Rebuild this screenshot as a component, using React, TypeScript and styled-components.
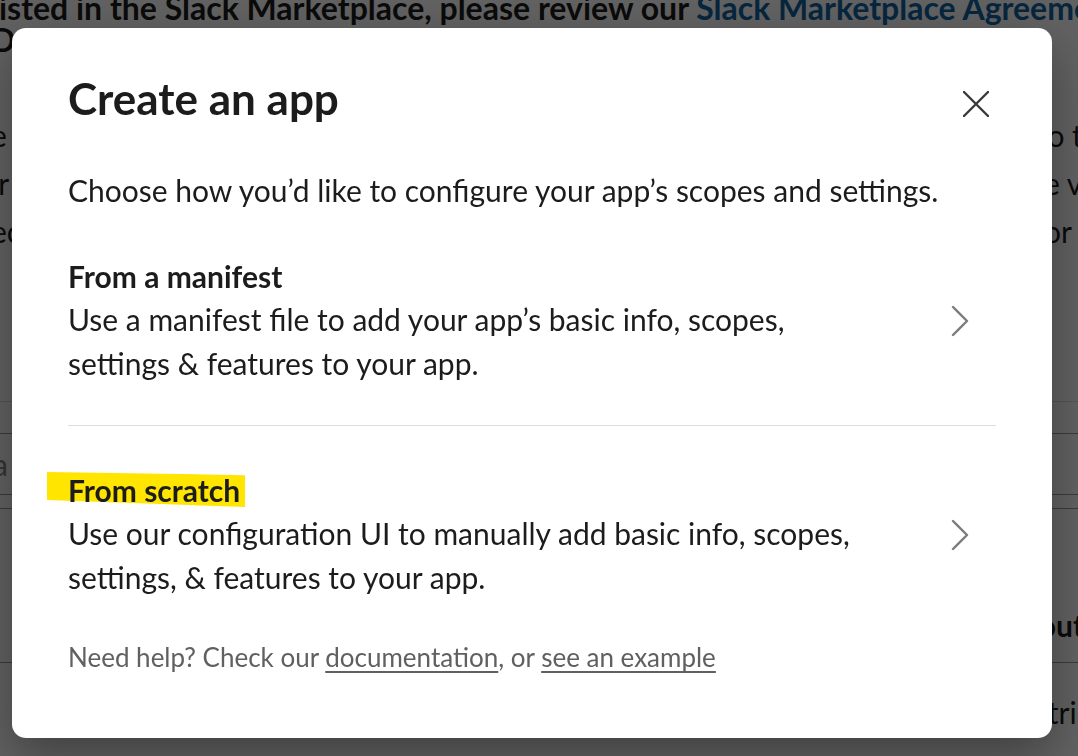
import { createGlobalStyle, styled } from "styled-components";

const GlobalStyle = createGlobalStyle`
  html, body {
    margin: 0;
    padding: 0;
    height: 100%;
    overflow: hidden;
    background: #ffffff;
  }
  body {
    font-family: Lato, "Noto Sans", sans-serif;
    color: #1d1c1d;
  }
`;

type BgRow = { left: string; right: string; split: number };

const bgRows: BgRow[] = [
  { left: "e", right: "into the", split: 1022 },
  { left: "ir", right: "e view", split: 1053 },
  { left: "ec", right: "or", split: 1053 },
];

const ChevronIcon = () => (
  <svg width="18" height="32" viewBox="0 0 18 32" fill="none">
    <path d="M2 2L16 16L2 30" stroke="#7c7c7c" strokeWidth="2.4" strokeLinecap="round" strokeLinejoin="round" />
  </svg>
);

const App = () => {
  return (
    <>
      <GlobalStyle />
      <Page>
        <Lead>
          listed in the Slack Marketplace, please review our <BgLink>Slack Marketplace Agreement,</BgLink>
          <br />
          Developer Policy, API TOS, and Brand Guidelines.
        </Lead>
        <BgPara>
          {bgRows.map((row, i) => (
            <BgLine key={i} $split={row.split}>
              <span>{row.left}</span>
              <span>{row.right}</span>
            </BgLine>
          ))}
        </BgPara>
        <BgRule />
        <BgInput>a</BgInput>
        <BgRule $dark />
        <BgHeading>
          <span />
          <span>About</span>
        </BgHeading>
        <BgRule $dark $gap={19} />
        <BgLine $split={1014} $gap={25}>
          <span />
          <span>Distribution</span>
        </BgLine>
      </Page>

      <Overlay>
        <Modal role="dialog" aria-label="Create an app">
          <Header>
            <Title>Create an app</Title>
            <CloseButton aria-label="Close">
              <svg width="26" height="26" viewBox="0 0 26 26" fill="none">
                <path d="M1 1L25 25M25 1L1 25" stroke="#3b3a3b" strokeWidth="2.4" strokeLinecap="round" />
              </svg>
            </CloseButton>
          </Header>

          <Intro>Choose how you’d like to configure your app’s scopes and settings.</Intro>

          <Options>
            <Option>
              <OptionText>
                <OptionTitle>From a manifest</OptionTitle>
                <OptionDesc>
                  Use a manifest file to add your app’s basic info, scopes, settings &amp; features to your app.
                </OptionDesc>
              </OptionText>
              <ChevronWrap>
                <ChevronIcon />
              </ChevronWrap>
            </Option>
            <Option>
              <OptionText>
                <OptionTitle>
                  <Highlight>From scratch</Highlight>
                </OptionTitle>
                <OptionDesc>
                  Use our configuration UI to manually add basic info, scopes, settings, &amp; features to your app.
                </OptionDesc>
              </OptionText>
              <ChevronWrap>
                <ChevronIcon />
              </ChevronWrap>
            </Option>
          </Options>

          <Footer>
            Need help? Check our <FooterLink>documentation</FooterLink>, or <FooterLink>see an example</FooterLink>
          </Footer>
        </Modal>
      </Overlay>
    </>
  );
};

/* page behind the dialog */

const Page = styled.div`
  width: 1130px;
  margin-left: -9px;
  padding-top: 1px;
  font-size: 30px;
  color: #1d1c1d;
`;

const Lead = styled.div`
  margin-top: -9px;
  font-size: 32px;
  font-weight: 700;
  line-height: 32px;
  white-space: nowrap;
`;

const BgLink = styled.span`
  color: #1264a3;
`;

const BgPara = styled.div`
  margin-top: 55px;
`;

const BgLine = styled.div<{ $split: number; $gap?: number }>`
  display: grid;
  grid-template-columns: ${({ $split }) => $split}px 1fr;
  margin-top: ${({ $gap }) => $gap ?? 0}px;
  line-height: 48px;
  white-space: nowrap;
`;

const BgRule = styled.div<{ $dark?: boolean; $gap?: number }>`
  height: 1px;
  background: ${({ $dark }) => ($dark ? "#9a9a9a" : "#dddddd")};
  margin-top: ${({ $dark, $gap }) => $gap ?? ($dark ? 13 : 146)}px;
`;

const BgInput = styled.div`
  margin-top: 31px;
  height: 60px;
  border-top: 1px solid #9a9a9a;
  border-bottom: 1px solid #9a9a9a;
  line-height: 60px;
  padding-left: 2px;
  color: #868686;
`;

const BgHeading = styled.div`
  display: grid;
  grid-template-columns: 1010px 1fr;
  margin-top: 98px;
  font-weight: 700;
  line-height: 36px;
  white-space: nowrap;
`;

/* dialog */

const Overlay = styled.div`
  position: fixed;
  inset: 0;
  background: rgba(0, 0, 0, 0.62);
  display: flex;
  align-items: flex-start;
  justify-content: flex-start;
  padding: 28px 0 0 12px;
`;

const Modal = styled.div`
  width: 1040px;
  box-sizing: border-box;
  padding: 46px 56px 65px 56px;
  background: #ffffff;
  border-radius: 14px;
  box-shadow: 0 18px 48px rgba(0, 0, 0, 0.35);
`;

const Header = styled.div`
  display: flex;
  justify-content: space-between;
  align-items: flex-start;
`;

const Title = styled.h1`
  margin: 0;
  font-size: 44px;
  line-height: 48px;
  font-weight: 700;
  color: #1d1c1d;
`;

const CloseButton = styled.button`
  display: flex;
  margin: 17px 7px 0 0;
  padding: 0;
  border: none;
  background: none;
  cursor: pointer;
`;

const Intro = styled.p`
  margin: 48px 0 0;
  font-size: 30px;
  line-height: 40px;
`;

const Options = styled.div`
  margin-top: 2px;
  display: flex;
  flex-direction: column;
`;

const Option = styled.div`
  display: flex;
  align-items: center;
  justify-content: space-between;
  padding: 44px 0 40px;
  cursor: pointer;

  & + & {
    border-top: 1px solid #dddddd;
  }
`;

const OptionText = styled.div`
  max-width: 805px;
`;

const OptionTitle = styled.div`
  font-size: 30px;
  line-height: 40px;
  font-weight: 700;
`;

const OptionDesc = styled.div`
  margin-top: 1px;
  font-size: 30px;
  line-height: 44px;
`;

const Highlight = styled.span`
  position: relative;
  display: inline-block;
  z-index: 0;

  &::before {
    content: "";
    position: absolute;
    left: -21px;
    right: -5px;
    top: 2px;
    bottom: 3px;
    background: #ffe500;
    clip-path: polygon(0 0, 100% 9%, 100% 100%, 0 80%);
    z-index: -1;
  }
`;

const ChevronWrap = styled.div`
  display: flex;
  margin-right: 27px;
`;

const Footer = styled.p`
  margin: 2px 0 0;
  font-size: 26px;
  line-height: 32px;
  color: #616061;
`;

const FooterLink = styled.a`
  color: #616061;
  text-decoration: underline;
  text-underline-offset: 4px;
  cursor: pointer;
`;

export default App;
